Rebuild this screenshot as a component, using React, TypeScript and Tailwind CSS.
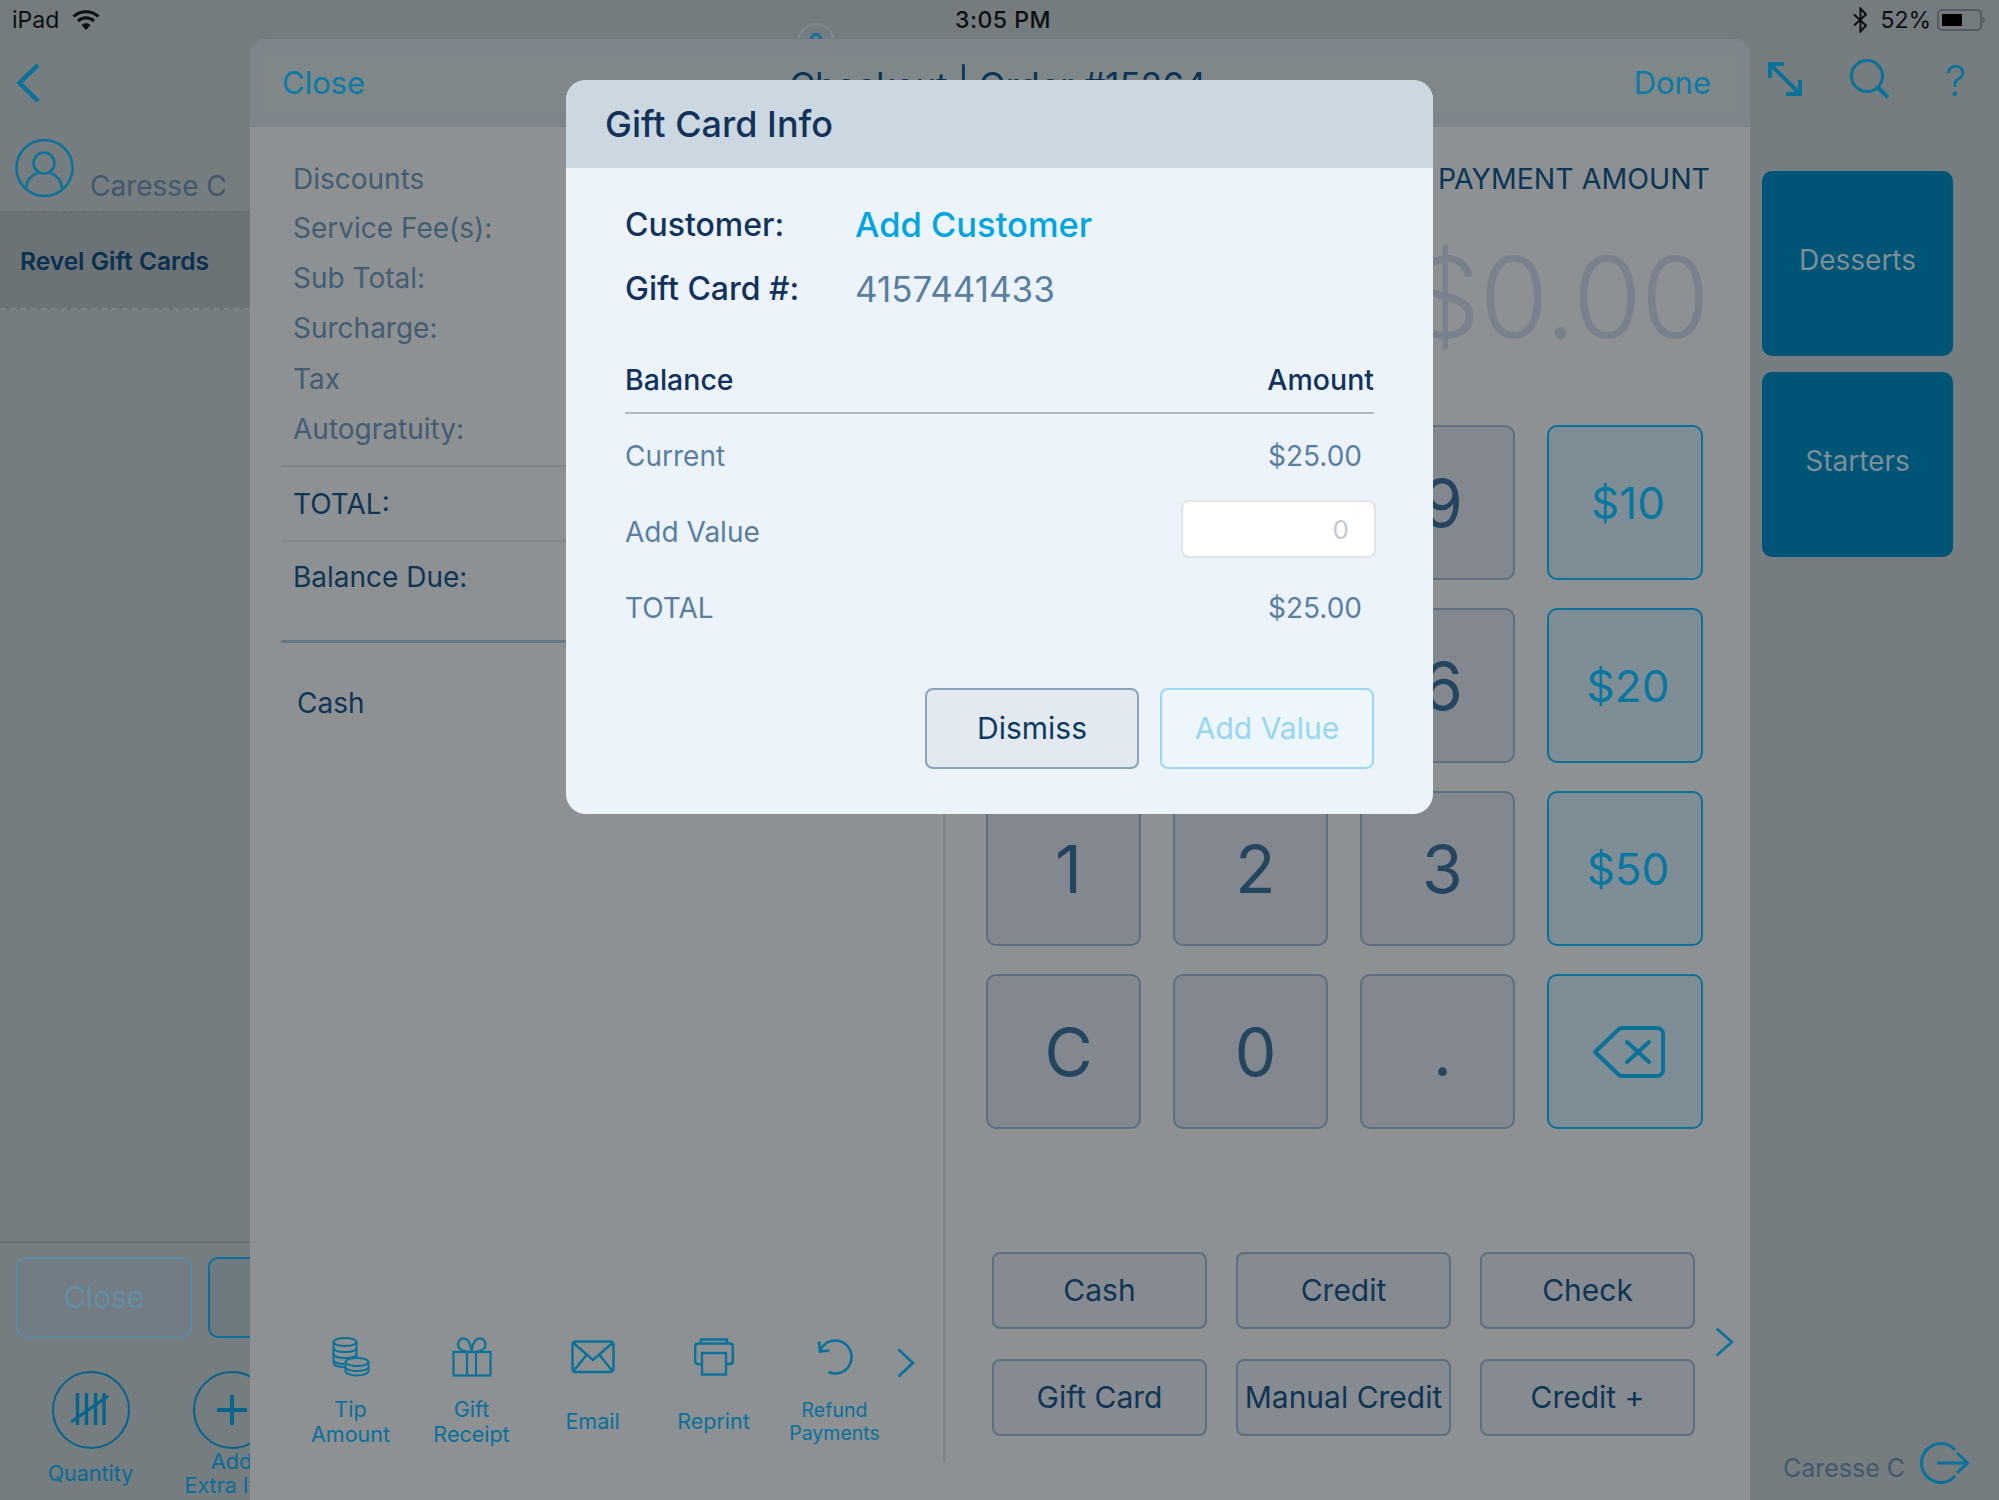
import React from "react";

const TEAL = "#0a7199";

function Wifi() {
  return (
    <svg width="28" height="22" viewBox="0 0 28 22" fill="none" stroke="#0b0f12" strokeWidth="3">
      <path d="M1.5 7.5C8.5 1 19.5 1 26.5 7.5" />
      <path d="M6 12C10.8 7.8 17.2 7.8 22 12" />
      <path d="M14 21L9.5 16C12 13.8 16 13.8 18.5 16Z" fill="#0b0f12" stroke="none" />
    </svg>
  );
}

function Bluetooth() {
  return (
    <svg width="15" height="26" viewBox="0 0 15 26" fill="none" stroke="#0b0f12" strokeWidth="2">
      <path d="M1 7.5L13 18.5L7.5 24.5V1.5L13 7.5L1 18.5" />
    </svg>
  );
}

function Battery() {
  return (
    <svg width="48" height="24" viewBox="0 0 48 24" fill="none">
      <rect x="1" y="2" width="43" height="20" rx="4" stroke="#555c60" strokeWidth="2" />
      <rect x="5" y="6" width="20" height="12" fill="#000" />
      <path d="M46 9C47.5 10 47.5 14 46 15Z" fill="#555c60" stroke="#555c60" />
    </svg>
  );
}

function Avatar() {
  return (
    <svg width="60" height="60" viewBox="0 0 60 60" fill="none" stroke={TEAL} strokeWidth="2.5">
      <circle cx="29.5" cy="30" r="28" />
      <circle cx="29" cy="25" r="10.5" />
      <path d="M11 50C12 41 18 36 24 34.5M47 50C46 41 40 36 34 34.5" />
    </svg>
  );
}

function Coins() {
  return (
    <svg width="38" height="40" viewBox="0 0 38 40" fill="none" stroke={TEAL} strokeWidth="2">
      <ellipse cx="13" cy="5" rx="11.5" ry="4" />
      <path d="M1.5 5V26C1.5 28.2 6 30 13 30M24.5 5V20" />
      <path d="M1.5 11C1.5 13.2 6 15 13 15S24.5 13.2 24.5 11M1.5 17C1.5 19.2 6 21 13 21S24.5 19.2 24.5 17M1.5 23C1.5 25 6 27 12 27" />
      <ellipse cx="25" cy="25" rx="11.5" ry="4" />
      <path d="M13.5 25V34C13.5 36.5 18.5 38.5 25 38.5S36.5 36.5 36.5 34V25M13.5 30C13.5 32.2 18.5 34 25 34S36.5 32.2 36.5 30" />
    </svg>
  );
}

function Gift() {
  return (
    <svg width="40" height="40" viewBox="0 0 40 40" fill="none" stroke={TEAL} strokeWidth="2.2">
      <rect x="1.5" y="15" width="37" height="23.5" />
      <path d="M15 15V38.5M24 15V38.5" />
      <path d="M19.5 15C12 15 6 13 6 7.5C6 3 9.5 1 12.5 1.5C16.5 2.3 19.5 8 19.5 15C19.5 8 23 2.3 27 1.5C30 1 33.5 3 33.5 7.5C33.5 13 27 15 19.5 15Z" />
    </svg>
  );
}

function Mail() {
  return (
    <svg width="44" height="34" viewBox="0 0 44 34" fill="none" stroke={TEAL} strokeWidth="2.4">
      <rect x="1.5" y="1.5" width="41" height="30.5" rx="3" />
      <path d="M2.5 3L22 20L41.5 3M2.5 31L15.5 15M41.5 31L28.5 15" />
    </svg>
  );
}

function Printer() {
  return (
    <svg width="40" height="38" viewBox="0 0 40 38" fill="none" stroke={TEAL} strokeWidth="2.4">
      <path d="M7 5.5V1.5H33V5.5" />
      <path d="M8 26H4C2.5 26 1.2 25 1.2 23V8.5C1.2 6.7 2.5 5.5 4 5.5H36C37.5 5.5 38.8 6.7 38.8 8.5V23C38.8 25 37.5 26 36 26H32" />
      <rect x="8" y="15" width="24" height="21.5" />
    </svg>
  );
}

function Undo() {
  return (
    <svg width="38" height="36" viewBox="0 0 38 36" fill="none" stroke={TEAL} strokeWidth="2.6">
      <path d="M4.5 11C8 4 14 1.5 19 1.5C28 1.5 35.5 8.5 35.5 18C35.5 27.5 28 34.5 19 34.5C16.5 34.5 14.5 34 12.5 33" />
      <path d="M3 2.5L4 12.5L13.5 11.5" />
    </svg>
  );
}

function Chevron({ w, h, sw }: { w: number; h: number; sw: number }) {
  return (
    <svg width={w} height={h} viewBox={`0 0 ${w} ${h}`} fill="none" stroke={TEAL} strokeWidth={sw}>
      <path d={`M1.5 1.5L${w - 2} ${h / 2}L1.5 ${h - 1.5}`} />
    </svg>
  );
}

function Backspace() {
  return (
    <svg width="72" height="52" viewBox="0 0 72 52" fill="none" stroke={TEAL} strokeWidth="4" strokeLinejoin="round" strokeLinecap="round">
      <path d="M2 26L26 3C27 2 28 2 29 2H64C67.5 2 70 4.5 70 8V44C70 47.5 67.5 50 64 50H29C28 50 27 50 26 49Z" />
      <path d="M34 16L56 36M56 16L34 36" />
    </svg>
  );
}

function Tally() {
  return (
    <svg width="40" height="36" viewBox="0 0 40 36" fill="none" stroke="#06648b" strokeWidth="3.4">
      <path d="M6.5 1V33M15.5 1V33M24.5 1V33M33 1V33" />
      <path d="M0 30L37 4" strokeWidth="3" />
    </svg>
  );
}

function Exit() {
  return (
    <svg width="50" height="42" viewBox="0 0 50 42" fill="none" stroke={TEAL} strokeWidth="3">
      <path d="M35 8C31 3.5 26.5 1.5 21.5 1.5C10.5 1.5 1.5 10 1.5 21C1.5 32 10.5 40.5 21.5 40.5C26.5 40.5 31 38.5 35 34" />
      <path d="M17 21H47M37 11L47.5 21L37 31" />
    </svg>
  );
}

function StatusBar() {
  return (
    <div className="relative h-[39px] shrink-0 grid grid-cols-[1fr_auto_1fr] items-center pt-[1px] bg-[#747c7f] text-[#0b0f12] overflow-hidden">
      <div className="absolute left-[797px] top-[23px] w-[38px] h-[38px] rounded-full border-2 border-[#80888b]">
        <div className="mx-auto mt-[8px] w-[12px] h-[12px] rounded-full border-[3px] border-[#0a7199]" />
      </div>
      <div className="flex items-center pl-[12px] gap-[13px] text-[23px]">
        <span>iPad</span>
        <Wifi />
      </div>
      <div className="ml-[7px] text-[23px] font-medium tracking-[0.5px]">3:05 PM</div>
      <div className="flex items-center justify-end pr-[14px] text-[23px]">
        <Bluetooth />
        <span className="ml-[12px] mr-[6px]">52%</span>
        <Battery />
      </div>
    </div>
  );
}

function Sidebar() {
  return (
    <aside className="w-[250px] shrink-0 flex flex-col bg-[#757d80] overflow-hidden">
      <div className="h-[88px] shrink-0 flex items-center pl-[16px]">
        <svg width="24" height="40" viewBox="0 0 24 40" fill="none" stroke={TEAL} strokeWidth="4.5">
          <path d="M22 2L3.5 20L22 38" />
        </svg>
      </div>
      <div className="h-[84px] shrink-0 flex items-start pl-[15px] pt-[11px] gap-[15px]">
        <Avatar />
        <span className="mt-[30px] text-[28px] leading-[36px] text-[#43586b] whitespace-nowrap">Caresse C</span>
      </div>
      <div className="h-[99px] shrink-0 flex items-center pl-[20px] pt-[1px] bg-[#6c7377] border-t-2 border-[#676d71] border-b-2 border-b-[#7d8487] border-dashed">
        <span className="text-[24.5px] font-semibold text-[#0b2f4e] whitespace-nowrap">Revel Gift Cards</span>
      </div>
      <div className="flex-1" />
      <div className="h-[259px] shrink-0 border-t-2 border-[#6a7174] pt-[14px]">
        <div className="flex gap-[16px] pl-[16px]">
          <div className="w-[176px] h-[81px] shrink-0 rounded-[10px] border-2 border-[#5f8ba2] bg-[#727c84] flex items-center justify-center text-[30px] text-[#638ea3]">
            Close
          </div>
          <div className="w-[176px] h-[81px] shrink-0 rounded-[10px] border-2 border-[#0a6f99] bg-[#6d7a80]" />
        </div>
        <div className="flex pl-[20px] mt-[33px] text-[21.5px] text-[#0a6b96]">
          <div className="w-[141px] shrink-0 flex flex-col items-center">
            <div className="w-[78px] h-[78px] rounded-full border-2 border-[#06648b] flex items-center justify-center">
              <Tally />
            </div>
            <span className="mt-[12px] leading-[24px]">Quantity</span>
          </div>
          <div className="w-[141px] shrink-0 flex flex-col items-center">
            <div className="w-[78px] h-[78px] rounded-full border-2 border-[#06648b] flex items-center justify-center">
              <svg width="32" height="32" viewBox="0 0 32 32" stroke="#06648b" strokeWidth="4">
                <path d="M16 1V31M1 16H31" />
              </svg>
            </div>
            <span className="leading-[24px]">Add</span>
            <span className="leading-[24px] pl-[20px] whitespace-nowrap">Extra Items</span>
          </div>
        </div>
      </div>
    </aside>
  );
}

const SUMMARY = [
  { label: "Discounts", h: "h-[49px]" },
  { label: "Service Fee(s):", h: "h-[49px]" },
  { label: "Sub Total:", h: "h-[51px]" },
  { label: "Surcharge:", h: "h-[50px]" },
  { label: "Tax", h: "h-[51px]" },
  { label: "Autogratuity:", h: "h-[50px]" },
];

const TOOLS = [
  { icon: <Coins />, lines: ["Tip", "Amount"], small: false },
  { icon: <Gift />, lines: ["Gift", "Receipt"], small: false },
  { icon: <Mail />, lines: ["Email"], small: false },
  { icon: <Printer />, lines: ["Reprint"], small: false },
  { icon: <Undo />, lines: ["Refund", "Payments"], small: true },
];

function LeftPane() {
  return (
    <div className="w-[696px] shrink-0 flex flex-col border-r-[3px] border-[#7e878c]">
      <div className="pl-[31px] pt-[27px]">
        <div className="pl-[12px] pb-[11px] text-[28px] text-[#445c72]">
          {SUMMARY.map((s) => (
            <div key={s.label} className={`${s.h} flex items-center`}>
              {s.label}
            </div>
          ))}
        </div>
        <div className="h-[75px] pl-[12px] flex items-center border-t-2 border-[#7e868b] text-[28px] text-[#0f3553]">TOTAL:</div>
        <div className="h-[103px] pl-[12px] pb-[28px] flex items-center border-t-2 border-b-[3px] border-t-[#7e868b] border-b-[#677888] text-[28px] text-[#0f3553]">
          Balance Due:
        </div>
        <div className="pl-[16px] mt-[38px] h-[44px] flex items-center text-[28px] text-[#0f3553]">Cash</div>
      </div>
      <div className="flex-1" />
      <div className="flex pl-[40px] items-start h-[125px]">
        {TOOLS.map((t) => (
          <div key={t.lines[0]} className="w-[121px] shrink-0 h-full flex flex-col items-center text-[#0a6f99]">
            <div className="h-[40px] flex items-center justify-center">{t.icon}</div>
            <div className={`flex-1 flex flex-col justify-center mt-[4px] text-center ${t.small ? "text-[19.5px] leading-[23px]" : "text-[21.5px] leading-[25px]"}`}>
              {t.lines.map((l) => (
                <span key={l}>{l}</span>
              ))}
            </div>
          </div>
        ))}
        <div className="mt-[11px] ml-[2px]">
          <Chevron w={18} h={30} sw={2.6} />
        </div>
      </div>
    </div>
  );
}

function DigitKey({ label }: { label: string }) {
  return (
    <div className="h-[155px] rounded-[10px] border-2 border-[#5d6e7e] bg-[#828790] flex items-center justify-center pl-[10px] pt-[2px] text-[66px] text-[#25455e]">
      {label}
    </div>
  );
}

function CashKey({ label }: { label: string }) {
  return (
    <div className="h-[155px] rounded-[10px] border-2 border-[#0a7199] bg-[#7f8e96] flex items-center justify-center pl-[6px] text-[44px] text-[#0877a0]">
      {label}
    </div>
  );
}

function RightPane() {
  return (
    <div className="flex-1 flex flex-col">
      <div className="h-[66px] mt-[19px] flex items-center justify-end pr-[40px] text-[28.5px] text-[#0b3554] whitespace-nowrap">PAYMENT AMOUNT</div>
      <div className="h-[130px] mt-[20px] flex items-center justify-end pr-[41px] text-[112px] font-light text-[#78818c] leading-none tracking-[-1px]">$0.00</div>
      <div className="mt-[63px] ml-[40px] grid grid-cols-[155px_155px_155px_156px] gap-x-[32px] gap-y-[28px]">
        <DigitKey label="7" />
        <DigitKey label="8" />
        <DigitKey label="9" />
        <CashKey label="$10" />
        <DigitKey label="4" />
        <DigitKey label="5" />
        <DigitKey label="6" />
        <CashKey label="$20" />
        <DigitKey label="1" />
        <DigitKey label="2" />
        <DigitKey label="3" />
        <CashKey label="$50" />
        <DigitKey label="C" />
        <DigitKey label="0" />
        <DigitKey label="." />
        <div className="h-[155px] rounded-[10px] border-2 border-[#0a7199] bg-[#7f8e96] flex items-center justify-center pl-[8px]">
          <Backspace />
        </div>
      </div>
      <div className="mt-[123px] ml-[46px] flex items-center">
        <div className="grid grid-cols-[215px_215px_215px] gap-x-[29px] gap-y-[30px]">
          {["Cash", "Credit", "Check", "Gift Card", "Manual Credit", "Credit +"].map((l) => (
            <div key={l} className="h-[77px] rounded-[8px] border-2 border-[#5c6e80] bg-[#868a91] flex items-center justify-center text-[30px] text-[#0f3553] whitespace-nowrap">
              {l}
            </div>
          ))}
        </div>
        <div className="ml-[20px] -mt-[4px]">
          <Chevron w={19} h={30} sw={2.6} />
        </div>
      </div>
    </div>
  );
}

function Panel() {
  return (
    <main className="w-[1500px] shrink-0 flex flex-col rounded-t-[16px] overflow-hidden bg-[#8d9194]">
      <header className="h-[88px] shrink-0 grid grid-cols-[1fr_auto_1fr] items-center bg-[#7f8789] border-y-[16px] border-x-[14px] border-[#7c858b]">
        <span className="pl-[18px] text-[31px] text-[#0b7ba6]">Close</span>
        <span className="-ml-[4px] pt-[4px] text-[35px] text-[#0b3554] whitespace-nowrap">Checkout | Order #15264</span>
        <span className="text-right pr-[25px] text-[31px] text-[#0b7ba6]">Done</span>
      </header>
      <div className="h-[1335px] shrink-0 flex">
        <LeftPane />
        <RightPane />
      </div>
    </main>
  );
}

function RightRail() {
  return (
    <aside className="flex-1 flex flex-col bg-[#757d80]">
      <div className="h-[88px] shrink-0 flex items-center pl-[17px] pb-[8px]">
        <svg width="36" height="36" viewBox="0 0 36 36" fill="none" stroke={TEAL} strokeWidth="4">
          <path d="M3 3L33 33M3 17V3H17M33 19V33H19" />
        </svg>
        <svg className="ml-[47px]" width="40" height="40" viewBox="0 0 40 40" fill="none" stroke={TEAL} strokeWidth="3">
          <circle cx="17" cy="17" r="15.5" />
          <path d="M27.5 28L38 38.5" strokeWidth="4" />
        </svg>
        <span className="ml-[55px] mt-[4px] text-[42px] font-light text-[#0a7199] leading-none">?</span>
      </div>
      <div className="ml-[12px] mt-[44px] w-[191px] flex flex-col gap-[16px]">
        <div className="h-[185px] rounded-[10px] bg-[#005576] flex items-center justify-center pb-[7px] text-[28px] text-[#7c8f99]">Desserts</div>
        <div className="h-[185px] rounded-[10px] bg-[#005576] flex items-center justify-center pb-[7px] text-[28px] text-[#7c8f99]">Starters</div>
      </div>
      <div className="flex-1" />
      <div className="h-[62px] shrink-0 flex items-start pl-[33px]">
        <span className="text-[25px] leading-[52px] mt-[4px] text-[#43586b] whitespace-nowrap">Caresse C</span>
        <div className="ml-[15px] mt-[4px]">
          <Exit />
        </div>
      </div>
    </aside>
  );
}

function GiftCardModal() {
  return (
    <div className="absolute left-[566px] top-[80px] w-[867px] h-[734px] rounded-[20px] overflow-hidden bg-[#edf3fa] flex flex-col">
      <div className="h-[88px] shrink-0 flex items-center pl-[39px] bg-[#cbd8e1] text-[36px] font-medium text-[#12325a]">Gift Card Info</div>
      <div className="px-[59px] pt-[25px]">
        <div className="flex h-[64px] items-center">
          <span className="w-[230px] text-[32px] font-medium text-[#12325a]">Customer:</span>
          <span className="text-[34.5px] font-medium text-[#00a5e0]">Add Customer</span>
        </div>
        <div className="flex h-[64px] items-center">
          <span className="w-[230px] text-[32px] font-medium text-[#12325a]">Gift Card #:</span>
          <span className="text-[35px] text-[#5a7f9e]">4157441433</span>
        </div>
        <div className="mt-[39px] h-[54px] pb-[12px] flex items-center justify-between border-b-2 border-[#b5bbc0] text-[28.5px] font-medium text-[#12325a]">
          <span>Balance</span>
          <span>Amount</span>
        </div>
        <div className="mt-[4px] text-[28px] text-[#5a7f9e]">
          <div className="h-[76px] flex items-center justify-between pr-[12px]">
            <span>Current</span>
            <span>$25.00</span>
          </div>
          <div className="h-[76px] flex items-center justify-between">
            <span>Add Value</span>
            <div className="w-[195px] h-[58px] mb-[6px] -mr-[2px] rounded-[8px] bg-white border-2 border-[#dfe4e8] flex items-center justify-end pr-[25px] text-[26px] text-[#c4c8cc]">0</div>
          </div>
          <div className="h-[76px] flex items-center justify-between pr-[12px]">
            <span>TOTAL</span>
            <span>$25.00</span>
          </div>
        </div>
        <div className="mt-[42px] flex justify-end gap-[21px]">
          <div className="w-[214px] h-[81px] rounded-[8px] bg-[#e2e9f0] border-2 border-[#8aa3bb] flex items-center justify-center text-[30px] text-[#0f3a5f]">Dismiss</div>
          <div className="w-[214px] h-[81px] rounded-[8px] bg-[#edf6fb] border-2 border-[#9ad8f2] flex items-center justify-center text-[30px] text-[#9ad6f0]">Add Value</div>
        </div>
      </div>
    </div>
  );
}

export default function App() {
  return (
    <div className="relative w-[1999px] h-[1500px] overflow-hidden flex flex-col bg-[#757d80] font-['Inter','Liberation_Sans',sans-serif]">
      <StatusBar />
      <div className="flex-1 flex min-h-0">
        <Sidebar />
        <Panel />
        <RightRail />
      </div>
      <GiftCardModal />
    </div>
  );
}
